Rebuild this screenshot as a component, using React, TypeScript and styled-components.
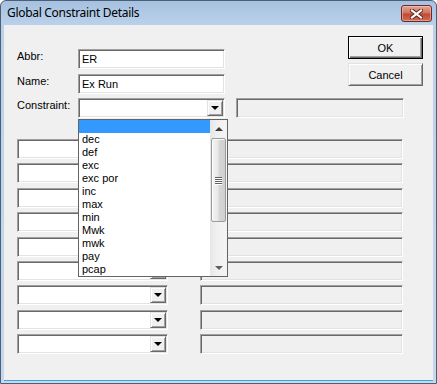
import React from "react";
import styled, { createGlobalStyle } from "styled-components";

const GlobalStyle = createGlobalStyle`
  html, body {
    margin: 0;
    padding: 0;
    background: #ffffff;
  }
  body {
    font-family: "Liberation Sans", Arial, sans-serif;
    font-size: 11px;
    color: #000;
  }
  * {
    box-sizing: border-box;
  }
`;

const Window = styled.div`
  width: 437px;
  height: 384px;
  display: flex;
  flex-direction: column;
  border: 1px solid #4d5f74;
  border-radius: 6px 6px 0 0;
  background: linear-gradient(#a6c1e0, #bad1ea 24px, #c4d9ee);
  overflow: hidden;
`;

const TitleBar = styled.div`
  height: 24px;
  display: flex;
  align-items: flex-start;
  padding: 0 4px 0 6px;
  flex-shrink: 0;
`;

const TitleText = styled.div`
  font-family: "Noto Sans", "Open Sans", sans-serif;
  font-size: 12px;
  line-height: 24px;
  color: #000;
  letter-spacing: -0.3px;
`;

const CloseButton = styled.div`
  margin-left: auto;
  margin-top: 4px;
  width: 31px;
  height: 17px;
  border: 1px solid #6b2a20;
  border-radius: 3px;
  background: linear-gradient(#e5a597 0%, #d2735f 45%, #bf4a34 55%, #cf6d57 100%);
  box-shadow: inset 0 0 0 1px rgba(255, 220, 210, 0.45);
  display: flex;
  align-items: center;
  justify-content: center;
`;

const Client = styled.div`
  flex: 1;
  margin: 0 3px 3px 3px;
  background: #f0f0f0;
  padding: 11px 0 0 13px;
  position: relative;
  box-shadow: 0 1px 0 #3aa6d8;
`;

const HeaderRow = styled.div`
  display: flex;
  align-items: flex-start;
`;

const FieldStack = styled.div`
  margin-top: 13px;
  display: flex;
  flex-direction: column;
  gap: 5px;
`;

const FieldRow = styled.div`
  display: flex;
  align-items: flex-start;
`;

const Label = styled.div`
  width: 61px;
  line-height: 13px;
  margin-top: 1px;
`;

const sunken = `
  border: 1px solid;
  border-color: #a0a0a0 #ffffff #ffffff #a0a0a0;
  box-shadow: inset 1px 1px 0 #696969, inset -1px -1px 0 #e3e3e3;
`;

const TextBox = styled.div<{ $width: number; $disabled?: boolean }>`
  ${sunken}
  width: ${(p) => p.$width}px;
  height: 20px;
  background: ${(p) => (p.$disabled ? "#f0f0f0" : "#ffffff")};
  padding: 0 3px;
  line-height: 18px;
  white-space: nowrap;
`;

const ButtonStack = styled.div`
  margin-left: auto;
  margin-right: 10px;
  display: flex;
  flex-direction: column;
  gap: 4px;
`;

const PushButton = styled.div<{ $default?: boolean }>`
  width: 75px;
  height: 23px;
  display: flex;
  align-items: center;
  justify-content: center;
  background: #f0f0f0;
  border: 1px solid;
  border-color: ${(p) =>
    p.$default ? "#000 #000 #000 #000" : "#e3e3e3 #696969 #696969 #e3e3e3"};
  box-shadow: ${(p) =>
    p.$default
      ? "inset 1px 1px 0 #ffffff, inset -1px -1px 0 #696969, inset -2px -2px 0 #a0a0a0"
      : "inset 1px 1px 0 #ffffff, inset -1px -1px 0 #a0a0a0"};
  font-size: 11px;
`;

const ConstraintRow = styled.div`
  margin-top: 4px;
  display: flex;
  align-items: flex-start;
`;

const Combo = styled.div<{ $width: number }>`
  ${sunken}
  position: relative;
  width: ${(p) => p.$width}px;
  height: 20px;
  background: #ffffff;
  display: flex;
  justify-content: flex-end;
  padding: 1px;
  flex-shrink: 0;
`;

const ComboButton = styled.div`
  width: 16px;
  height: 16px;
  background: #f0f0f0;
  border: 1px solid;
  border-color: #e3e3e3 #696969 #696969 #e3e3e3;
  box-shadow: inset 1px 1px 0 #ffffff, inset -1px -1px 0 #a0a0a0;
  display: flex;
  align-items: center;
  justify-content: center;
`;

const Arrow = styled.div<{ $up?: boolean; $color?: string }>`
  width: 0;
  height: 0;
  border-left: 4px solid transparent;
  border-right: 4px solid transparent;
  ${(p) =>
    p.$up
      ? `border-bottom: 4px solid ${p.$color || "#000"};`
      : `border-top: 4px solid ${p.$color || "#000"};`}
`;

const Spacer = styled.div<{ $w: number }>`
  width: ${(p) => p.$w}px;
  flex-shrink: 0;
`;

const Rows = styled.div`
  margin-top: 21px;
  display: flex;
  flex-direction: column;
  gap: 4.4px;
`;

const Row = styled.div`
  display: flex;
  align-items: flex-start;
`;

const DropList = styled.div`
  position: absolute;
  top: 20px;
  left: -1px;
  width: 150px;
  height: 158px;
  border: 1px solid #646464;
  background: #ffffff;
  display: flex;
  z-index: 10;
`;

const Items = styled.div`
  flex: 1;
  display: flex;
  flex-direction: column;
`;

const Item = styled.div<{ $selected?: boolean }>`
  height: 13px;
  line-height: 13px;
  padding-left: 3px;
  background: ${(p) => (p.$selected ? "#3399ff" : "transparent")};
  color: ${(p) => (p.$selected ? "#fff" : "#000")};
  white-space: nowrap;
`;

const ScrollBar = styled.div`
  width: 17px;
  display: flex;
  flex-direction: column;
  background: linear-gradient(to right, #e6e6e6, #f0f0f0 40%, #f4f4f4);
`;

const ScrollArrow = styled.div`
  height: 17px;
  display: flex;
  align-items: center;
  justify-content: center;
  flex-shrink: 0;
`;

const Thumb = styled.div`
  margin: 1px 1px 0 1px;
  height: 84px;
  border: 1px solid #9c9c9c;
  border-radius: 2px;
  background: linear-gradient(to right, #f4f4f4, #e8e8e8 45%, #d6d6d6 55%, #cfcfcf);
  box-shadow: inset 1px 1px 0 #fbfbfb;
  display: flex;
  flex-direction: column;
  align-items: center;
  justify-content: center;
  gap: 1px;
`;

const Grip = styled.div`
  width: 7px;
  height: 1px;
  background: #5f5f5f;
  box-shadow: 0 1px 0 #ffffff;
`;

const TrackFill = styled.div`
  flex: 1;
`;

const options = ["", "dec", "def", "exc", "exc por", "inc", "max", "min", "Mwk", "mwk", "pay", "pcap"];

const App: React.FC = () => {
  return (
    <>
      <GlobalStyle />
      <Window>
        <TitleBar>
          <TitleText>Global Constraint Details</TitleText>
          <CloseButton>
            <svg width="13" height="10" viewBox="0 0 13 10">
              <path d="M2 1.5 L11 8.5 M11 1.5 L2 8.5" stroke="#5a2119" strokeWidth="4" strokeLinecap="square" />
              <path d="M2 1.5 L11 8.5 M11 1.5 L2 8.5" stroke="#ffffff" strokeWidth="2.2" strokeLinecap="square" />
            </svg>
          </CloseButton>
        </TitleBar>
        <Client>
          <HeaderRow>
            <FieldStack>
              <FieldRow>
                <Label>Abbr:</Label>
                <TextBox $width={147}>ER</TextBox>
              </FieldRow>
              <FieldRow>
                <Label>Name:</Label>
                <TextBox $width={147}>Ex Run</TextBox>
              </FieldRow>
            </FieldStack>
            <ButtonStack>
              <PushButton $default>OK</PushButton>
              <PushButton>Cancel</PushButton>
            </ButtonStack>
          </HeaderRow>
          <ConstraintRow>
            <Label>Constraint:</Label>
            <Combo $width={147}>
              <ComboButton>
                <Arrow />
              </ComboButton>
              <DropList>
                <Items>
                  {options.map((o, i) => (
                    <Item key={i} $selected={i === 0}>
                      {o}
                    </Item>
                  ))}
                </Items>
                <ScrollBar>
                  <ScrollArrow>
                    <Arrow $up $color="#3c3c3c" />
                  </ScrollArrow>
                  <Thumb>
                    <Grip />
                    <Grip />
                    <Grip />
                    <Grip />
                  </Thumb>
                  <TrackFill />
                  <ScrollArrow>
                    <Arrow $color="#606060" />
                  </ScrollArrow>
                </ScrollBar>
              </DropList>
            </Combo>
            <Spacer $w={11} />
            <TextBox $width={168} $disabled />
          </ConstraintRow>
          <Rows>
            {Array.from({ length: 9 }).map((_, i) => (
              <Row key={i}>
                <Combo $width={151}>
                  <ComboButton>
                    <Arrow />
                  </ComboButton>
                </Combo>
                <Spacer $w={32} />
                <TextBox $width={203} $disabled />
              </Row>
            ))}
          </Rows>
        </Client>
      </Window>
    </>
  );
};

export default App;
